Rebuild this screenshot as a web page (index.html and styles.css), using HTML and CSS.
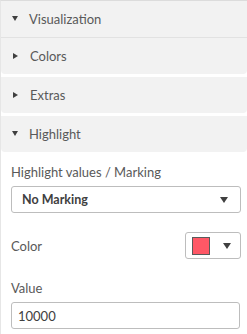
FILE: index.html
```html
<!DOCTYPE html>
<html lang="en">
<head>
    <meta charset="UTF-8">
    <meta name="viewport" content="width=device-width, initial-scale=1.0">
    <title>Properties</title>
    <link rel="stylesheet" href="styles.css">
</head>
<body>

    <div class="panel">
        <div class="section-head">
            <span class="caret down"></span>
            <span>Visualization</span>
        </div>

        <div class="group">
            <span class="caret right"></span>
            <span>Colors</span>
        </div>
        <div class="group">
            <span class="caret right"></span>
            <span>Extras</span>
        </div>
        <div class="group open">
            <span class="caret down"></span>
            <span>Highlight</span>
        </div>

        <div class="content">
            <label class="field-label">Highlight values / Marking</label>
            <div class="select">
                <span>No Marking</span>
                <span class="arrow"></span>
            </div>

            <div class="color-row">
                <label>Color</label>
                <div class="color-button">
                    <span class="swatch"></span>
                    <span class="arrow"></span>
                </div>
            </div>

            <label class="field-label">Value</label>
            <input class="text-input" type="text" value="10000">
        </div>
    </div>

</body>
</html>
```

FILE: styles.css
```css
body {
    font-family: Lato, "Open Sans", sans-serif;
    font-size: 13px;
    color: #595959;
    background: #fff;
    margin: 0;
}
.panel {
    height: 333px;
    border-top: 1px solid #dcdcdc;
    border-left: 1px solid #e6e6e6;
}
.section-head, .group {
    display: flex;
    align-items: center;
    height: 36px;
    padding-left: 11px;
    background: #f2f2f2;
}
.section-head {
    border-bottom: 1px solid #e2e2e2;
}
.group {
    border-radius: 0 0 4px 4px;
    margin-bottom: 3px;
}
.group.open {
    margin-bottom: 0;
}
.caret {
    width: 0;
    height: 0;
    margin-right: 11px;
}
.caret.down {
    border-left: 3.5px solid transparent;
    border-right: 3.5px solid transparent;
    border-top: 5px solid #404040;
    margin-top: -2px;
}
.caret.right {
    border-top: 3.5px solid transparent;
    border-bottom: 3.5px solid transparent;
    border-left: 5px solid #404040;
    margin-left: 1px;
    margin-right: 12px;
}
.content {
    padding: 11px 6px 0 10px;
}
.field-label {
    display: block;
    line-height: 18px;
    margin-bottom: 5px;
}
.select {
    display: flex;
    align-items: center;
    justify-content: space-between;
    height: 25px;
    padding: 0 12px 0 10px;
    border: 1px solid #bdbdbd;
    border-radius: 3px;
    font-weight: bold;
    font-size: 12.5px;
    color: #404040;
}
.arrow {
    width: 0;
    height: 0;
    border-left: 4.5px solid transparent;
    border-right: 4.5px solid transparent;
    border-top: 6px solid #404040;
}
.color-row {
    display: flex;
    align-items: center;
    justify-content: space-between;
    margin: 19px 0 20px;
}
.color-button {
    display: flex;
    align-items: center;
    justify-content: space-between;
    width: 39px;
    height: 25px;
    padding: 0 9px 0 6px;
    border: 1px solid #bdbdbd;
    border-radius: 3px;
}
.swatch {
    width: 16px;
    height: 16px;
    background: #ff5866;
    border: 1px solid #5a5a5a;
}
.text-input {
    box-sizing: border-box;
    width: 229px;
    height: 27px;
    padding: 0 6px;
    border: 1px solid #bdbdbd;
    border-radius: 3px;
    font-family: Lato, "Open Sans", sans-serif;
    font-size: 13px;
    color: #404040;
    outline: none;
}
```
